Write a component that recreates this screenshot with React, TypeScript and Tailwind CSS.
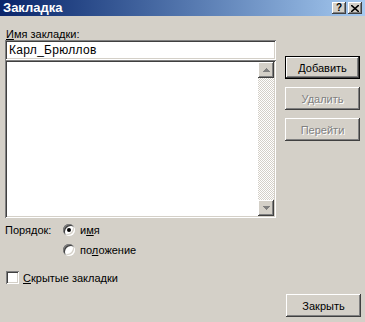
import React from "react";

const raised =
  "bg-[#d4d0c8] shadow-[inset_-1px_-1px_#404040,inset_1px_1px_#ffffff,inset_-2px_-2px_#808080,inset_2px_2px_#d4d0c8]";
const sunken =
  "shadow-[inset_1px_1px_#808080,inset_-1px_-1px_#ffffff,inset_2px_2px_#404040,inset_-2px_-2px_#d4d0c8]";

function Arrow({ up }: { up?: boolean }) {
  return (
    <svg width="7" height="4" viewBox="0 0 7 4" className="block">
      {up ? (
        <path d="M3 0h1v1h1v1h1v1h1v1H0V3h1V2h1V1h1z" fill="#808080" />
      ) : (
        <path d="M0 0h7v1H6v1H5v1H4v1H3V3H2V2H1V1H0z" fill="#808080" />
      )}
    </svg>
  );
}

function Button({
  children,
  isDefault,
  disabled,
}: {
  children: React.ReactNode;
  isDefault?: boolean;
  disabled?: boolean;
}) {
  return (
    <div
      className={`w-[75px] h-[23px] flex items-center justify-center ${
        isDefault ? "border border-black" : ""
      }`}
    >
      <div
        className={`w-full h-full flex items-center justify-center ${raised} ${
          disabled ? "text-[#808080] [text-shadow:1px_1px_#ffffff]" : "text-black"
        }`}
      >
        {children}
      </div>
    </div>
  );
}

function Radio({ checked, children }: { checked?: boolean; children: React.ReactNode }) {
  return (
    <div className="flex items-center h-[12px]">
      <div
        className={`w-[12px] h-[12px] rounded-full bg-white flex items-center justify-center ${sunken}`}
      >
        {checked && <div className="w-[4px] h-[4px] rounded-full bg-black" />}
      </div>
      <span className="ml-[5px]">{children}</span>
    </div>
  );
}

export default function App() {
  return (
    <div className="w-[365px] h-[322px] bg-[#d4d0c8] flex flex-col font-['Liberation_Sans',Arial,sans-serif] text-[11px] leading-[12px] text-black overflow-hidden">
      {/* title bar */}
      <div className="h-[16px] flex items-center justify-between bg-gradient-to-r from-[#0a246a] to-[#a6caf0] pl-[3px] pr-[3px]">
        <span className="text-white font-bold text-[13px] leading-[16px]">Закладка</span>
        <div className="flex gap-[2px]">
          <div className={`w-[14px] h-[12px] flex items-center justify-center ${raised}`}>
            <span className="text-[10px] font-bold leading-none">?</span>
          </div>
          <div className={`w-[14px] h-[12px] flex items-center justify-center ${raised}`}>
            <svg width="8" height="7" viewBox="0 0 8 7">
              <path d="M0 0L8 7M8 0L0 7" stroke="#000" strokeWidth="1.6" />
            </svg>
          </div>
        </div>
      </div>

      <div className="flex px-[5px]">
        {/* left column */}
        <div className="w-[272px] flex flex-col">
          <div className="mt-[12px] h-[12px] pl-[1px]">
            <span className="underline underline-offset-[1px]">И</span>мя закладки:
          </div>
          <div className={`h-[20px] bg-white flex items-center pl-[4px] text-[12px] tracking-[0.3px] ${sunken}`}>
            Карл_Брюллов
          </div>
          <div className={`h-[158px] bg-white flex justify-end p-[2px] ${sunken}`}>
            <div className="w-[16px] flex flex-col">
              <div className={`h-[16px] flex items-center justify-center ${raised}`}>
                <Arrow up />
              </div>
              <div className="flex-1 bg-[repeating-conic-gradient(#ffffff_0_25%,#d4d0c8_0_50%)] bg-size-[2px_2px]" />
              <div className={`h-[16px] flex items-center justify-center ${raised}`}>
                <Arrow />
              </div>
            </div>
          </div>
        </div>

        {/* right column */}
        <div className="ml-[9px] mt-[40px] flex flex-col gap-[8px]">
          <Button isDefault>
            <span>
              <span className="underline underline-offset-[1px]">Д</span>обавить
            </span>
          </Button>
          <Button disabled>Удалить</Button>
          <Button disabled>Перейти</Button>
        </div>
      </div>

      {/* order */}
      <div className="flex px-[5px] mt-[6px]">
        <div className="w-[58px] h-[12px] flex items-center">Порядок:</div>
        <div className="flex flex-col gap-[8px]">
          <Radio checked>
            и<span className="underline underline-offset-[1px]">м</span>я
          </Radio>
          <Radio>
            по<span className="underline underline-offset-[1px]">л</span>ожение
          </Radio>
        </div>
      </div>

      {/* hidden bookmarks */}
      <div className="flex items-center px-[6px] mt-[15px]">
        <div className={`w-[13px] h-[13px] bg-white ${sunken}`} />
        <span className="ml-[4px]">
          <span className="underline underline-offset-[1px]">С</span>крытые закладки
        </span>
      </div>

      <div className="flex justify-start pl-[286px] mt-[10px]">
        <Button>Закрыть</Button>
      </div>
    </div>
  );
}
